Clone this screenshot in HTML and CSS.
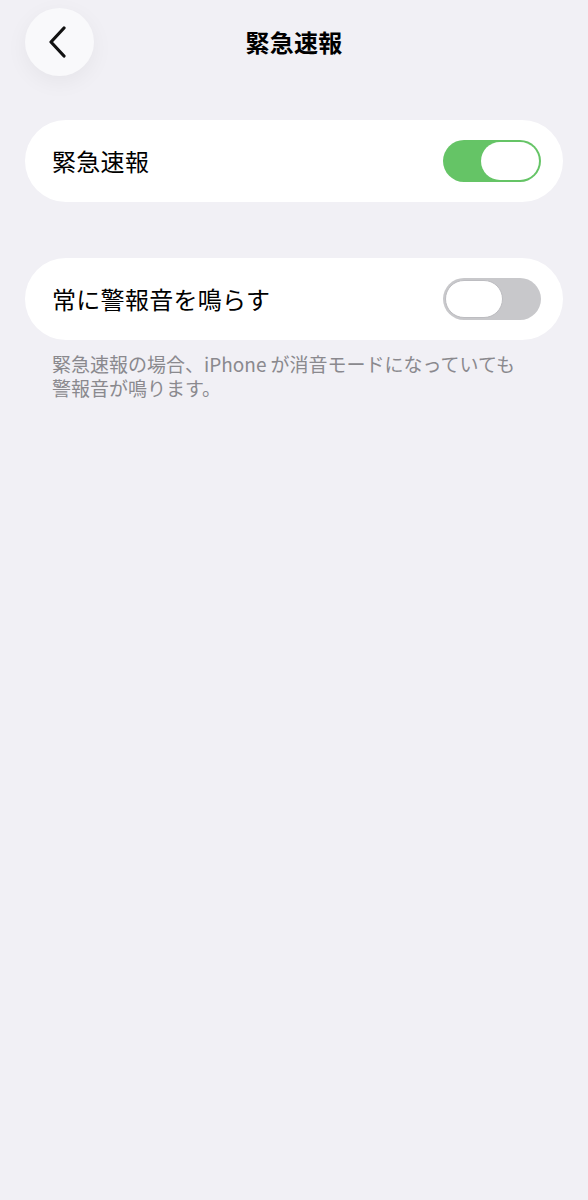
FILE: index.html
```html
<!DOCTYPE html>
<html lang="ja">
<head>
<meta charset="utf-8">
<title>緊急速報</title>
<link rel="stylesheet" href="styles.css">
</head>
<body>
<div class="screen">
  <header class="nav">
    <button class="back" aria-label="戻る">
      <svg width="24" height="32" viewBox="0 0 24 32"><path d="M18 2 L5 16 L18 30" fill="none" stroke="#111" stroke-width="3.2" stroke-linecap="round" stroke-linejoin="round"/></svg>
    </button>
    <h1 class="title">緊急速報</h1>
  </header>

  <section class="card">
    <span class="label">緊急速報</span>
    <span class="toggle on"><span class="knob"></span></span>
  </section>

  <section class="card second">
    <span class="label">常に警報音を鳴らす</span>
    <span class="toggle off"><span class="knob"></span></span>
  </section>
  <p class="note">緊急速報の場合、iPhone<span class="sp"></span>が消音モードになっていても<br>警報音が鳴ります。</p>
</div>
</body>
</html>
```

FILE: styles.css
```css
* { box-sizing: border-box; }
html, body {
  margin: 0;
  padding: 0;
  background: #f1f0f5;
  font-family: "Noto Sans CJK JP", "Noto Sans", sans-serif;
  color: #000;
}
.screen {
  width: 588px;
  min-height: 1200px;
  padding: 8px 25px 0 25px;
}
.nav {
  position: relative;
  height: 68px;
  display: flex;
  align-items: center;
  justify-content: center;
}
.back {
  position: absolute;
  left: 0;
  top: 0;
  width: 69px;
  height: 68px;
  border-radius: 50%;
  border: none;
  background: #f9f9fb;
  box-shadow: 0 6px 22px rgba(0,0,0,0.05);
  display: flex;
  align-items: center;
  justify-content: center;
  padding: 0 4px 0 0;
}
.title {
  margin: 0;
  font-size: 24px;
  font-weight: 700;
  line-height: 68px;
  letter-spacing: 0.2px;
}
.card {
  margin-top: 44px;
  height: 82px;
  border-radius: 41px;
  background: #fff;
  display: flex;
  align-items: center;
  justify-content: space-between;
  padding: 0 22px 0 27px;
}
.card.second { margin-top: 56px; }
.label {
  font-size: 24px;
  line-height: 1;
  letter-spacing: 0.3px;
}
.toggle {
  position: relative;
  width: 98px;
  height: 42px;
  border-radius: 21px;
  display: block;
}
.toggle.on { background: #65c466; }
.toggle.off { background: #c8c8cb; }
.knob {
  position: absolute;
  top: 2px;
  width: 58px;
  height: 38px;
  border-radius: 19px;
  background: #fff;
}
.toggle.on .knob { right: 2px; }
.toggle.off .knob {
  left: 2px;
  border: 1px solid #bdbdc1;
}
.note {
  margin: 12px 0 0 27px;
  font-size: 19px;
  line-height: 24px;
  color: #8a898e;
}
.sp { display: inline-block; width: 4px; }
```
